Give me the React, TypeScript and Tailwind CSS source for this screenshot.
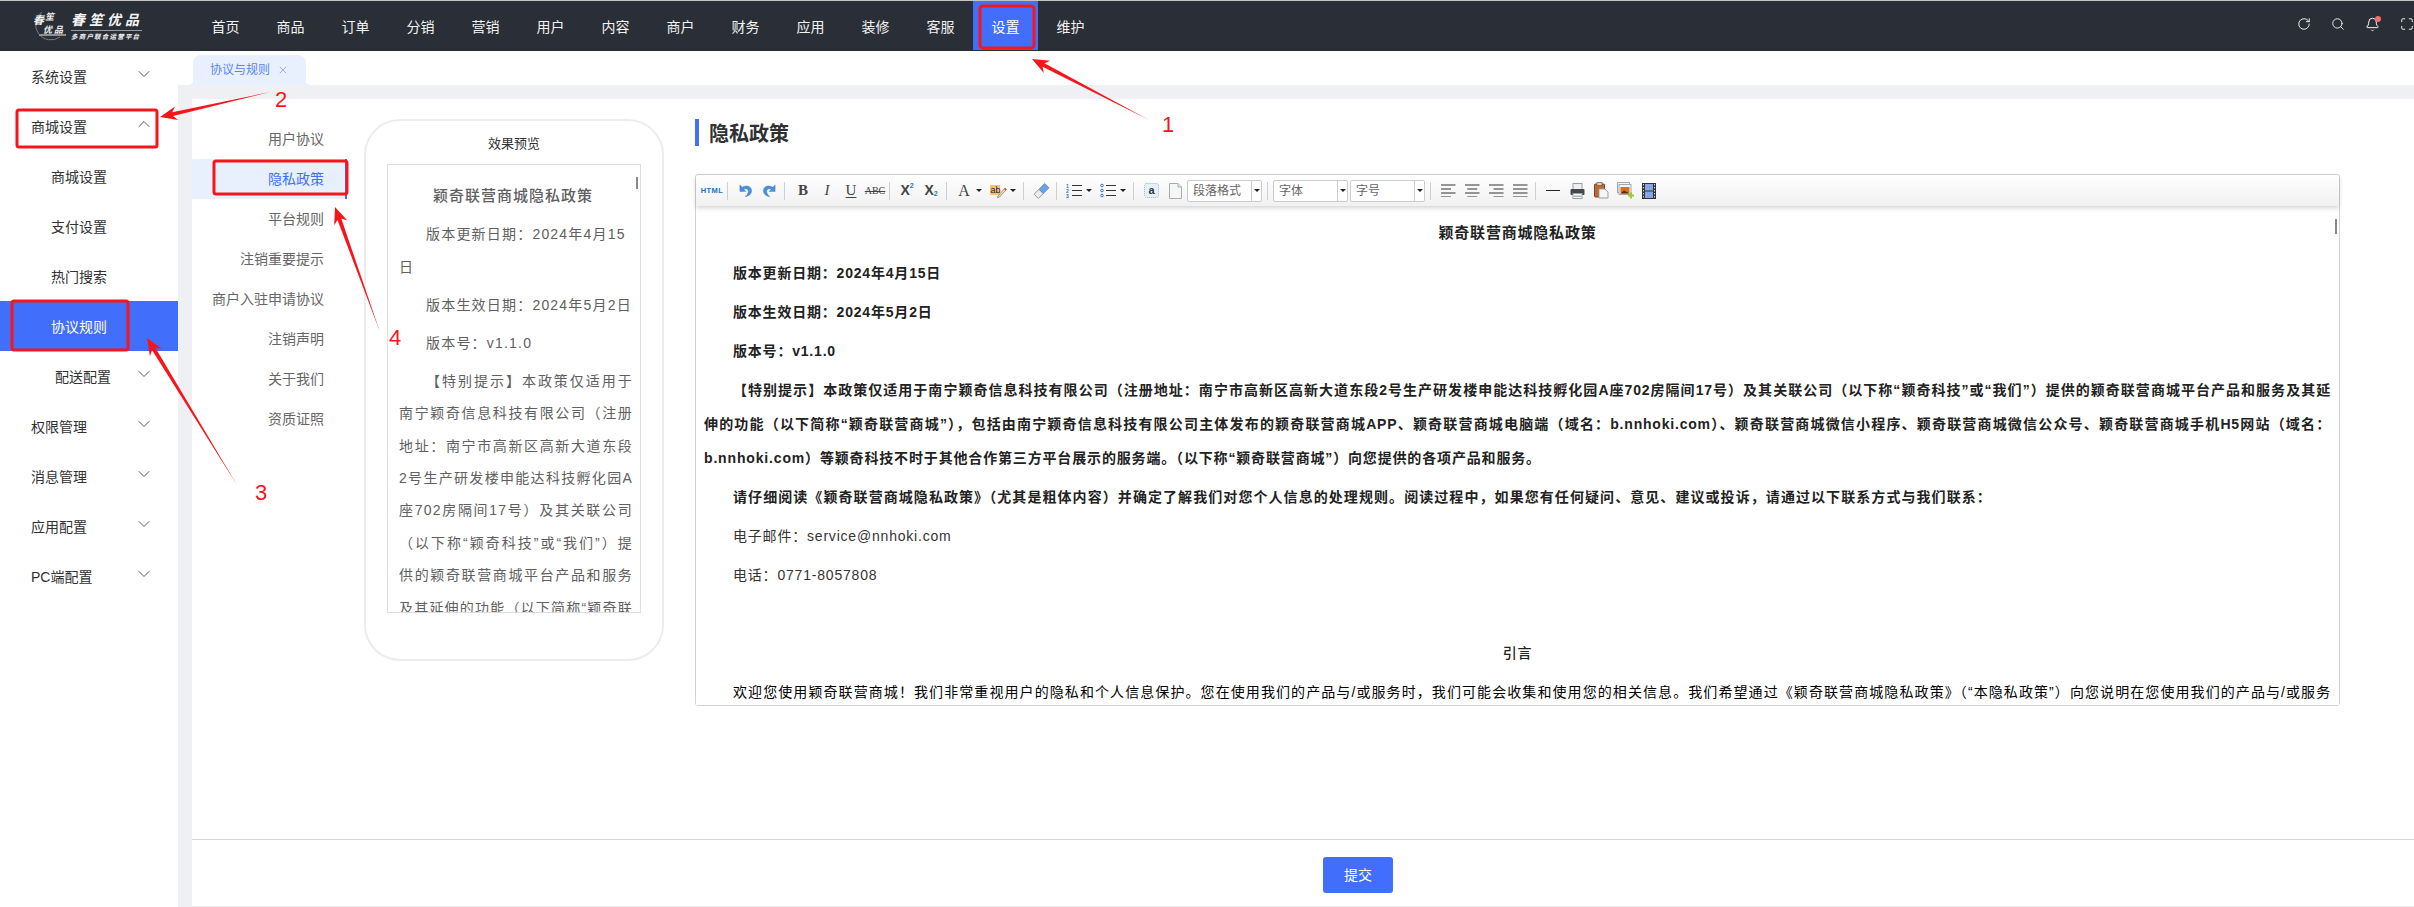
import { Bell, ChevronDown, ChevronUp, Maximize, RotateCw, Search, X } from 'lucide-react';

const navItems = ['首页', '商品', '订单', '分销', '营销', '用户', '内容', '商户', '财务', '应用', '装修', '客服', '设置', '维护'];
const ruleItems = ['用户协议', '隐私政策', '平台规则', '注销重要提示', '商户入驻申请协议', '注销声明', '关于我们', '资质证照'];

const previewLines = [
  '南宁颖奇信息科技有限公司（注册',
  '地址：南宁市高新区高新大道东段',
  '2号生产研发楼申能达科技孵化园A',
  '座702房隔间17号）及其关联公司',
  '（以下称“颖奇科技”或“我们”）提',
  '供的颖奇联营商城平台产品和服务',
  '及其延伸的功能（以下简称“颖奇联',
];

const SideItem = ({ label, sub, open, active, chevron = true, narrow }: { label: string; sub?: boolean; open?: boolean; active?: boolean; chevron?: boolean; narrow?: boolean }) => (
  <div className={`flex h-[50px] items-center justify-between pr-[24px] pt-[2px] text-[14px] ${sub ? (narrow ? 'pl-[55px]' : 'pl-[51px]') : 'pl-[31px]'} ${active ? 'bg-[#416ffb] text-white' : 'text-[#303133]'}`}>
    <span>{label}</span>
    {chevron && (open ? <ChevronUp size={20} strokeWidth={1.1} className="-mt-[6px] text-[#445]" /> : <ChevronDown size={20} strokeWidth={1.1} className="-mt-[6px] text-[#445]" />)}
  </div>
);

const Sep = ({ l = 3, r = 5 }: { l?: number; r?: number }) => (
  <span className={`h-[18px] w-px shrink-0 bg-[#cfcfcf] ${l === 2 ? 'ml-[2px]' : l === 5 ? 'ml-[5px]' : l === 7 ? 'ml-[7px]' : 'ml-[3px]'} ${r === 6 ? 'mr-[6px]' : 'mr-[5px]'}`} />
);

const Btn = ({ children }: { children: React.ReactNode }) => (
  <span className="flex h-[22px] w-[24px] shrink-0 items-center justify-center text-[#444]">{children}</span>
);

const Caret = ({ gap }: { gap?: boolean }) => (
  <span className={`flex w-[6px] shrink-0 justify-center ${gap ? 'mr-[4px]' : ''}`}>
    <span className="h-0 w-0 border-x-[3px] border-t-[3px] border-x-transparent border-t-[#222]" />
  </span>
);

const SelectBox = ({ label, gap }: { label: string; gap?: boolean }) => (
  <span className={`flex h-[22px] w-[75px] shrink-0 items-center rounded-[2px] border border-[#cccccc] bg-white ${gap ? 'ml-[2px]' : ''}`}>
    <span className="flex h-full w-[64px] items-center border-r border-[#cccccc] pl-[5px] text-[12px] text-[#666]">{label}</span>
    <span className="flex flex-1 justify-center">
      <span className="h-0 w-0 border-x-[3px] border-t-[3px] border-x-transparent border-t-[#222]" />
    </span>
  </span>
);

const AlignIcon = ({ kind }: { kind: 'left' | 'center' | 'right' | 'justify' }) => {
  const rows = [0, 1, 2, 3];
  return (
    <svg width="15" height="13" viewBox="0 0 15 13">
      {rows.map(i => {
        const short = i % 2 === 1 && kind !== 'justify';
        const w = short ? 10 : 14.5;
        const x = kind === 'center' ? (14.5 - w) / 2 : kind === 'right' ? 14.5 - w : 0;
        return <rect key={i} x={x} y={i * 4 + 0.5} width={w} height="1" fill="#333" />;
      })}
    </svg>
  );
};

const HookArrow = ({ flip }: { flip?: boolean }) => (
  <svg width="15" height="15" viewBox="0 0 16 16" className={flip ? '-scale-x-100' : ''}>
    <path d="M2 2 V9 H8.5 L6.3 6.8 C8.3 5.4 11 6.3 11 8.8 C11 11 9.8 12.8 7.6 14.5 C12 14 14.5 11.4 14.5 8.2 C14.5 3.8 9 1.4 4.6 4.6 Z" fill="#4a90d9" stroke="#2f74bf" strokeWidth="0.4" />
  </svg>
);

const Toolbar = () => (
  <div className="relative z-10 flex h-[31px] items-center rounded-t-[3px] bg-gradient-to-b from-white to-[#f1f1f1] pl-[4px] shadow-[0_2px_5px_rgba(0,0,0,0.18)]">
    <Btn><span className="text-[7.5px] font-bold tracking-[0.4px] text-[#2a6fb0]">HTML</span></Btn>
    <Sep />
    <Btn><HookArrow /></Btn>
    <Btn><HookArrow flip /></Btn>
    <Sep r={6} />
    <Btn><span className="font-['Liberation_Serif',serif] text-[15px] font-bold">B</span></Btn>
    <Btn><span className="font-['Liberation_Serif',serif] text-[15px] italic">I</span></Btn>
    <Btn><span className="font-['Liberation_Serif',serif] text-[15px] underline underline-offset-2">U</span></Btn>
    <Btn><span className="font-['Liberation_Serif',serif] text-[10px] line-through">ABC</span></Btn>
    <Sep l={2} />
    <Btn><span className="font-bold text-[14px]">X</span><span className="-mt-[8px] text-[7px] font-bold text-[#2d6fd8]">2</span></Btn>
    <Btn><span className="font-bold text-[14px]">X</span><span className="mt-[8px] text-[7px] font-bold text-[#2d6fd8]">2</span></Btn>
    <Sep />
    <Btn><span className="font-['Liberation_Serif',serif] text-[16px]">A</span></Btn>
    <Caret gap />
    <Btn>
      <svg width="17" height="14" viewBox="0 0 17 14">
        <rect x="0" y="1" width="10" height="10" fill="#f7c46c" />
        <text x="0.5" y="9" fontSize="9" fontFamily="Liberation Sans" fill="#222">ab</text>
        <path d="M8 12 L15 4 L16.5 5.5 L9.5 13 L7.5 13.5 Z" fill="#f3e4c0" stroke="#8a6a3a" strokeWidth="0.7" />
        <path d="M14 5 L15 4 L16.5 5.5 L15.5 6.5 Z" fill="#e0453a" />
      </svg>
    </Btn>
    <Caret />
    <Sep l={7} />
    <Btn>
      <svg width="17" height="16" viewBox="0 0 17 16">
        <g transform="rotate(-45 8.5 8)">
          <rect x="1" y="5" width="7" height="6" fill="#eeeeee" stroke="#888" strokeWidth="0.8" />
          <rect x="8" y="5" width="8" height="6" fill="#6ba3e8" stroke="#5f86b8" strokeWidth="0.8" />
        </g>
      </svg>
    </Btn>
    <Sep />
    <Btn>
      <svg width="17" height="15" viewBox="0 0 17 15">
        <text x="0" y="4.5" fontSize="5" fontWeight="700" fontFamily="Liberation Sans" fill="#2d6fd8">1</text>
        <text x="0" y="9.5" fontSize="5" fontWeight="700" fontFamily="Liberation Sans" fill="#2d6fd8">2</text>
        <text x="0" y="14.5" fontSize="5" fontWeight="700" fontFamily="Liberation Sans" fill="#2d6fd8">3</text>
        <rect x="6" y="2" width="10" height="1" fill="#333" />
        <rect x="6" y="7" width="10" height="1" fill="#333" />
        <rect x="6" y="12" width="10" height="1" fill="#333" />
      </svg>
    </Btn>
    <Caret gap />
    <Btn>
      <svg width="17" height="15" viewBox="0 0 17 15">
        {[2.5, 7.5, 12.5].map(y => (
          <g key={y}>
            <circle cx="2" cy={y} r="1.3" fill="none" stroke="#2d6fd8" strokeWidth="1" />
            <rect x="6" y={y - 0.5} width="10" height="1" fill="#333" />
          </g>
        ))}
      </svg>
    </Btn>
    <Caret />
    <Sep l={7} />
    <Btn>
      <svg width="15" height="15" viewBox="0 0 15 15">
        <rect x="0.5" y="0.5" width="14" height="14" rx="2" fill="#e6effc" stroke="#8fb4ea" strokeDasharray="1 1" />
        <text x="7.5" y="11" textAnchor="middle" fontSize="11" fontWeight="700" fontFamily="Liberation Sans" fill="#333">a</text>
      </svg>
    </Btn>
    <Btn>
      <svg width="13" height="16" viewBox="0 0 13 16">
        <path d="M0.5 0.5 H9 L12.5 4 V15.5 H0.5 Z" fill="#f5f6f8" stroke="#a9adb3" />
        <path d="M9 0.5 V4 H12.5" fill="#e3e5e8" stroke="#a9adb3" />
      </svg>
    </Btn>
    <SelectBox label="段落格式" />
    <Sep l={5} />
    <SelectBox label="字体" />
    <SelectBox label="字号" gap />
    <Sep l={5} />
    <Btn><AlignIcon kind="left" /></Btn>
    <Btn><AlignIcon kind="center" /></Btn>
    <Btn><AlignIcon kind="right" /></Btn>
    <Btn><AlignIcon kind="justify" /></Btn>
    <Sep />
    <Btn><span className="h-px w-[14px] bg-[#222]" /></Btn>
    <Btn>
      <svg width="15" height="16" viewBox="0 0 15 16">
        <rect x="3" y="0.5" width="9" height="6" fill="#eef0f2" stroke="#9a9ea3" />
        <rect x="0.5" y="6" width="14" height="6" rx="1" fill="#44484d" />
        <rect x="3" y="10.5" width="9" height="5" fill="#fff" stroke="#9a9ea3" />
        <rect x="4" y="12.5" width="7" height="1.5" fill="#8cb2e6" />
      </svg>
    </Btn>
    <Btn>
      <svg width="15" height="17" viewBox="0 0 15 17">
        <rect x="0.5" y="2" width="10" height="13" rx="1" fill="#b86a35" stroke="#7f4522" />
        <rect x="3" y="0.5" width="5" height="3" fill="#d9d2c5" stroke="#7f4522" strokeWidth="0.6" />
        <path d="M5 7 H11 L14 10 V16 H5 Z" fill="#f4f6f9" stroke="#9aa0a8" />
      </svg>
    </Btn>
    <Btn>
      <svg width="17" height="17" viewBox="0 0 17 17">
        <rect x="0.5" y="0.5" width="12" height="10" fill="#f6f6f6" stroke="#a8a8a8" />
        <rect x="2" y="2.5" width="12" height="10" fill="#f6f6f6" stroke="#a8a8a8" />
        <rect x="3.5" y="5" width="9" height="6.5" fill="#d9701c" />
        <path d="M3.5 11.5 L7 8.5 L12.5 11.5 Z" fill="#5a2c10" />
        <path d="M11 12.5 h2 v-2 h2 v2 h2 v2 h-2 v2 h-2 v-2 h-2 Z" fill="#9acb2a" />
      </svg>
    </Btn>
    <Btn>
      <svg width="14" height="16" viewBox="0 0 14 16">
        <rect x="0" y="0" width="14" height="16" fill="#333" />
        <rect x="3" y="1" width="8" height="6.5" fill="#86a5e6" />
        <rect x="3" y="8.5" width="8" height="6.5" fill="#86a5e6" />
        {[1, 4, 7, 10, 13].map(y => (
          <g key={y}>
            <rect x="1" y={y} width="1" height="1.4" fill="#ddd" />
            <rect x="12" y={y} width="1" height="1.4" fill="#ddd" />
          </g>
        ))}
      </svg>
    </Btn>
  </div>
);

const Para = ({ children, bold, wide }: { children: React.ReactNode; bold?: boolean; wide?: boolean }) => (
  <p className={`mb-[5px] h-[34px] indent-[29px] leading-[34px] ${wide ? 'tracking-[1.07px]' : ''} ${bold ? 'font-bold text-[#222]' : 'text-[#333]'}`}>{children}</p>
);

const Full = ({ children, indent }: { children: React.ReactNode; indent?: boolean }) => (
  <span className={`block h-[34px] whitespace-nowrap leading-[34px] [text-align-last:justify] ${indent ? 'indent-[29px]' : ''}`}>{children}</span>
);

const Editor = () => (
  <div className="flex h-[532px] flex-col rounded-[3px] border border-[#d2d2d2]">
    <Toolbar />
    <div className="relative flex-1 overflow-hidden bg-white px-[8px] pt-[10px] text-[14px] tracking-[0.8px]">
      <span className="absolute right-[2px] top-[13px] h-[15px] w-[2px] bg-[#888]" />
      <p className="mb-[6px] h-[34px] text-center text-[15px] font-bold leading-[34px] text-[#222]">颖奇联营商城隐私政策</p>
      <Para bold>版本更新日期：2024年4月15日</Para>
      <Para bold>版本生效日期：2024年5月2日</Para>
      <Para bold>版本号：v1.1.0</Para>
      <div className="mb-[5px] font-bold text-[#222]">
        <Full indent>【特别提示】本政策仅适用于南宁颖奇信息科技有限公司（注册地址：南宁市高新区高新大道东段2号生产研发楼申能达科技孵化园A座702房隔间17号）及其关联公司（以下称“颖奇科技”或“我们”）提供的颖奇联营商城平台产品和服务及其延</Full>
        <Full>伸的功能（以下简称“颖奇联营商城”），包括由南宁颖奇信息科技有限公司主体发布的颖奇联营商城APP、颖奇联营商城电脑端（域名：b.nnhoki.com）、颖奇联营商城微信小程序、颖奇联营商城微信公众号、颖奇联营商城手机H5网站（域名：</Full>
        <span className="block h-[34px] leading-[34px] tracking-[0.84px]">b.nnhoki.com）等颖奇科技不时于其他合作第三方平台展示的服务端。（以下称“颖奇联营商城”）向您提供的各项产品和服务。</span>
      </div>
      <Para bold wide>请仔细阅读《颖奇联营商城隐私政策》（尤其是粗体内容）并确定了解我们对您个人信息的处理规则。阅读过程中，如果您有任何疑问、意见、建议或投诉，请通过以下联系方式与我们联系：</Para>
      <Para>电子邮件：service@nnhoki.com</Para>
      <Para>电话：0771-8057808</Para>
      <Para>{' '}</Para>
      <p className="mb-[5px] h-[34px] text-center font-medium leading-[34px] text-[#222]">引言</p>
      <Full indent>欢迎您使用颖奇联营商城！我们非常重视用户的隐私和个人信息保护。您在使用我们的产品与/或服务时，我们可能会收集和使用您的相关信息。我们希望通过《颖奇联营商城隐私政策》（“本隐私政策”）向您说明在您使用我们的产品与/或服务</Full>
    </div>
  </div>
);

const PhonePreview = () => (
  <div className="ml-[17px] flex h-[542px] w-[300px] shrink-0 flex-col items-center rounded-[36px] border-2 border-[#ececec]">
    <div className="h-[43px] text-[13px] leading-[46px] text-[#333]">效果预览</div>
    <div className="relative h-[449px] w-[254px] overflow-hidden border border-[#dddddd] pl-[11px] pr-[7px] pt-[15px] text-[14px] tracking-[1.2px] text-[#606060]">
      <span className="absolute right-[2px] top-[12px] h-[12px] w-[2px] bg-[#888]" />
      <p className="mb-[6px] pr-[6px] text-center text-[15px] font-medium leading-[32.4px] tracking-[1px]">颖奇联营商城隐私政策</p>
      <p className="whitespace-nowrap indent-[27px] leading-[32.4px]">版本更新日期：2024年4月15</p>
      <p className="leading-[32.4px]">日</p>
      <p className="mt-[5.6px] whitespace-nowrap indent-[27px] leading-[32.4px]">版本生效日期：2024年5月2日</p>
      <p className="mt-[5.6px] indent-[27px] leading-[32.4px]">版本号：v1.1.0</p>
      <p className="mt-[5.6px] indent-[27px] leading-[32.4px] [text-align-last:justify]">【特别提示】本政策仅适用于</p>
      {previewLines.map(line => (
        <p key={line} className="whitespace-nowrap leading-[32.4px] [text-align-last:justify]">{line}</p>
      ))}
    </div>
  </div>
);

// red guide marks drawn over the page: arrows point from label to target
const arrows = [
  { x1: 1149, y1: 120, x2: 1032, y2: 59 },
  { x1: 270, y1: 92, x2: 160, y2: 117 },
  { x1: 237, y1: 485, x2: 147, y2: 338 },
  { x1: 380, y1: 332, x2: 335, y2: 207 },
];

const arrowPoints = ({ x1, y1, x2, y2 }: { x1: number; y1: number; x2: number; y2: number }) => {
  const len = Math.hypot(x2 - x1, y2 - y1);
  const ux = (x2 - x1) / len;
  const uy = (y2 - y1) / len;
  const at = (back: number, side: number) => `${x2 - ux * back - uy * side},${y2 - uy * back + ux * side}`;
  return [`${x1},${y1}`, at(13, 2), at(17, 7), `${x2},${y2}`, at(17, -7), at(13, -2)].join(' ');
};

const Annotations = () => (
  <svg width="2414" height="907" className="pointer-events-none absolute left-0 top-0 z-20">
    {arrows.map(a => (
      <polygon key={a.x1} points={arrowPoints(a)} fill="#f5161c" />
    ))}
    <rect x="980" y="6" width="54" height="42" rx="3" fill="none" stroke="#f5161c" strokeWidth="3" />
    <rect x="17" y="110" width="140" height="37" rx="2" fill="none" stroke="#f5161c" strokeWidth="3" />
    <rect x="12" y="301" width="116" height="49" rx="2" fill="none" stroke="#f5161c" strokeWidth="3" />
    <rect x="214" y="161" width="133" height="33" rx="2" fill="none" stroke="#f5161c" strokeWidth="3" />
    <g fontFamily="Liberation Sans, sans-serif" fontSize="22" fill="#f5161c" textAnchor="middle">
      <text x="1168" y="132">1</text>
      <text x="281" y="107">2</text>
      <text x="261" y="500">3</text>
      <text x="395" y="345">4</text>
    </g>
  </svg>
);

const Logo = () => (
  <div className="flex w-[193px] shrink-0 items-center pl-[30px]">
    <svg width="37" height="32" viewBox="0 0 37 32" className="shrink-0">
      <path d="M12 2 A15 15 0 1 0 30 27" fill="none" stroke="#9a9a9a" strokeWidth="0.7" />
      <text x="3" y="14" fontSize="11" fontWeight="700" fontStyle="italic" fontFamily="Noto Sans CJK SC" fill="#efefef">春</text>
      <text x="15" y="10" fontSize="9" fontWeight="700" fontStyle="italic" fontFamily="Noto Sans CJK SC" fill="#efefef">笙</text>
      <text x="13" y="23" fontSize="9" fontWeight="700" fontStyle="italic" fontFamily="Noto Sans CJK SC" fill="#efefef">优</text>
      <text x="24" y="23" fontSize="9" fontWeight="700" fontStyle="italic" fontFamily="Noto Sans CJK SC" fill="#efefef">品</text>
      <rect x="9" y="24" width="27" height="2" fill="#8f8f8f" />
    </svg>
    <div className="ml-[4px] w-[71px] text-[#f5f5f5]">
      <div className="whitespace-nowrap border-b border-[#9a9a9a] pb-[1px] text-[14px] font-bold italic leading-[17px] tracking-[4px]">春笙优品</div>
      <div className="mt-[2px] whitespace-nowrap text-[6.5px] font-bold italic leading-[8px] tracking-[1.2px]">多商户联合运营平台</div>
    </div>
  </div>
);

const App = () => {
  return (
    <div className="relative flex h-[907px] w-[2414px] flex-col overflow-hidden bg-white font-['Liberation_Sans','Noto_Sans_CJK_SC',sans-serif]">
      {/* top bar */}
      <header className="flex h-[51px] shrink-0 border-t border-[#c4c4c4] bg-[#2a2e37]">
        <Logo />
        <nav className="flex">
          {navItems.map(item => (
            <div key={item} className={`flex h-[49px] w-[65px] items-center justify-center pt-[3px] text-[14px] ${item === '设置' ? 'bg-[#416ffb] text-white' : 'text-[#f2f2f2]'}`}>
              {item}
            </div>
          ))}
        </nav>
        <div className="ml-auto flex -translate-y-[2px] items-center gap-[20px] text-[#f4f4f4]">
          <RotateCw size={14} strokeWidth={1.6} />
          <Search size={14} strokeWidth={1.6} />
          <span className="relative">
            <Bell size={15} strokeWidth={1.6} />
            <span className="absolute -right-[1px] -top-[1px] h-[6px] w-[6px] rounded-full bg-[#f56c6c]" />
          </span>
          <Maximize size={14} strokeWidth={1.6} />
        </div>
      </header>

      <div className="flex flex-1">
        {/* sidebar */}
        <aside className="w-[178px] shrink-0 bg-white">
          <SideItem label="系统设置" />
          <SideItem label="商城设置" open />
          <SideItem label="商城设置" sub chevron={false} />
          <SideItem label="支付设置" sub chevron={false} />
          <SideItem label="热门搜索" sub chevron={false} />
          <SideItem label="协议规则" sub active chevron={false} />
          <SideItem label="配送配置" sub narrow />
          <SideItem label="权限管理" />
          <SideItem label="消息管理" />
          <SideItem label="应用配置" />
          <SideItem label="PC端配置" />
        </aside>

        <div className="flex min-w-0 flex-1 flex-col">
          {/* tab strip */}
          <div className="flex h-[34px] shrink-0 items-end bg-white pl-[15px]">
            <div className="relative flex h-[30px] w-[113px] items-center rounded-t-[8px] bg-[#e8f0fe] pl-[17px] text-[12px] text-[#5b85f5] before:absolute before:bottom-0 before:-left-[3px] before:h-[4px] before:w-[3px] before:bg-[radial-gradient(circle_at_0_0,transparent_3px,#e8f0fe_3px)] after:absolute after:bottom-0 after:-right-[3px] after:h-[4px] after:w-[3px] after:bg-[radial-gradient(circle_at_100%_0,transparent_3px,#e8f0fe_3px)]">
              协议与规则
              <X size={12} strokeWidth={1.2} className="ml-[7px]" />
            </div>
          </div>

          <div className="flex flex-1 flex-col bg-[#eff0f4] pl-[14px] pt-[14px]">
            <div className="flex flex-1 flex-col border-b border-[#ececec] bg-white">
              <div className="flex h-[740px] pt-[20px]">
                {/* rule menu */}
                <div className="w-[155px] shrink-0">
                  {ruleItems.map(item => (
                    <div key={item} className={`flex h-[40px] items-center justify-end text-[14px] ${item === '隐私政策' ? 'border-r-2 border-[#416ffb] bg-[#e8f0fe] pr-[21px] text-[#416ffb]' : 'pr-[23px] text-[#666]'}`}>
                      {item}
                    </div>
                  ))}
                </div>

                <PhonePreview />

                <div className="ml-[31px] w-[1645px] shrink-0">
                  <div className="flex h-[27px] items-center border-l-4 border-[#416ffb] pl-[10px] pt-[2px] text-[20px] font-bold text-[#303133]">隐私政策</div>
                  <div className="mt-[28px]">
                    <Editor />
                  </div>
                </div>
              </div>

              {/* submit row */}
              <div className="flex flex-1 justify-center border-t border-[#d8d8d8] pl-[110px] pt-[17px]">
                <button className="h-[36px] w-[70px] rounded-[3px] bg-[#416ffb] text-[14px] text-white">提交</button>
              </div>
            </div>
          </div>
        </div>
      </div>

      <Annotations />
    </div>
  );
};

export default App;
